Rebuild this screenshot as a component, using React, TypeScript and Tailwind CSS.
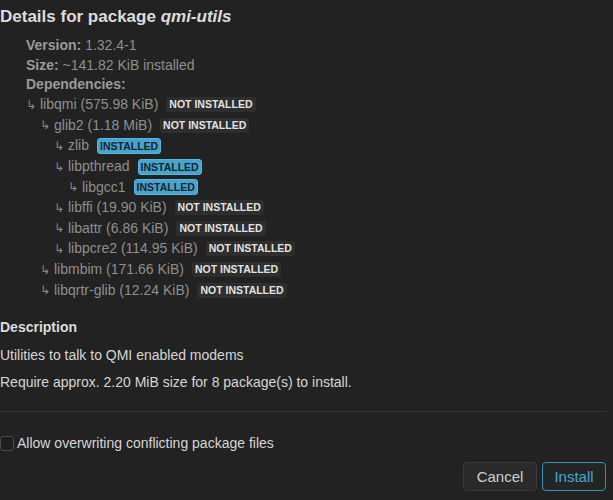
import React from "react";

type Dep = {
  name: string;
  size?: string;
  level: number;
  installed: boolean;
};

const deps: Dep[] = [
  { name: "libqmi", size: "575.98 KiB", level: 0, installed: false },
  { name: "glib2", size: "1.18 MiB", level: 1, installed: false },
  { name: "zlib", level: 2, installed: true },
  { name: "libpthread", level: 2, installed: true },
  { name: "libgcc1", level: 3, installed: true },
  { name: "libffi", size: "19.90 KiB", level: 2, installed: false },
  { name: "libattr", size: "6.86 KiB", level: 2, installed: false },
  { name: "libpcre2", size: "114.95 KiB", level: 2, installed: false },
  { name: "libmbim", size: "171.66 KiB", level: 1, installed: false },
  { name: "libqrtr-glib", size: "12.24 KiB", level: 1, installed: false },
];

const indents = ["pl-[26px]", "pl-[40px]", "pl-[54px]", "pl-[68px]"];

const Badge: React.FC<{ installed: boolean }> = ({ installed }) =>
  installed ? (
    <span className="ml-2 rounded-[3px] border border-[#5bb4dc] bg-[#46a4cd] px-[2px] text-[10.5px] font-bold leading-[14px] text-[#15242d]">
      INSTALLED
    </span>
  ) : (
    <span className="ml-2 rounded-[3px] bg-[#2e2e2e] px-[3px] text-[10.5px] font-bold leading-[15px] text-[#e2e2e2]">
      NOT INSTALLED
    </span>
  );

const App: React.FC = () => {
  return (
    <div className="h-[500px] w-[613px] overflow-hidden bg-[#222222] font-['Liberation_Sans',Arial,sans-serif] text-[14px]">
      <h2 className="pt-[6px] text-[17px] font-bold leading-[22px] text-[#dcdcdc]">
        Details for package <i>qmi-utils</i>
      </h2>

      <div className="mt-[8px] pl-[26px] leading-[19.5px] text-[#8f8f8f]">
        <div>
          <b className="text-[#9a9a9a]">Version:</b> 1.32.4-1
        </div>
        <div>
          <b className="text-[#9a9a9a]">Size:</b> ~141.82 KiB installed
        </div>
        <div>
          <b className="text-[#9a9a9a]">Dependencies:</b>
        </div>
      </div>

      <ul>
        {deps.map((d) => (
          <li
            key={d.name}
            className={`flex h-[20.6px] items-center text-[#8f8f8f] ${indents[d.level]}`}
          >
            <span className="w-[14px] font-['DejaVu_Sans',sans-serif] text-[12px] leading-none text-[#8a8a8a]">
              ↳
            </span>
            <span>
              {d.name}
              {d.size ? ` (${d.size})` : ""}
            </span>
            <Badge installed={d.installed} />
          </li>
        ))}
      </ul>

      <h3 className="mt-[17px] text-[14px] font-bold leading-[20px] text-[#dcdcdc]">
        Description
      </h3>
      <p className="mt-[8px] leading-[20px] text-[#d6d6d6]">
        Utilities to talk to QMI enabled modems
      </p>
      <p className="mt-[7px] leading-[20px] text-[#d6d6d6]">
        Require approx. 2.20 MiB size for 8 package(s) to install.
      </p>

      <div className="mt-[19px] mr-[6px] h-px bg-[#333333]" />

      <label className="mt-[21px] flex h-[20px] items-center text-[#d6d6d6]">
        <input
          type="checkbox"
          className="h-[15px] w-[14px] appearance-none rounded-[3px] border border-[#4a4a4a] bg-[#1f1f1f]"
        />
        <span className="ml-[3px]">Allow overwriting conflicting package files</span>
      </label>

      <div className="mt-[9px] flex justify-end gap-[5px] pr-[7px]">
        <button className="h-[29px] w-[74px] rounded-[4px] border border-[#3b3b3b] bg-[#2a2a2a] text-[15px] text-[#cfcfcf]">
          Cancel
        </button>
        <button className="h-[29px] w-[64px] rounded-[4px] border border-[#3a8fb5] bg-[#232527] text-[15px] text-[#47a7d4]">
          Install
        </button>
      </div>
    </div>
  );
};

export default App;
